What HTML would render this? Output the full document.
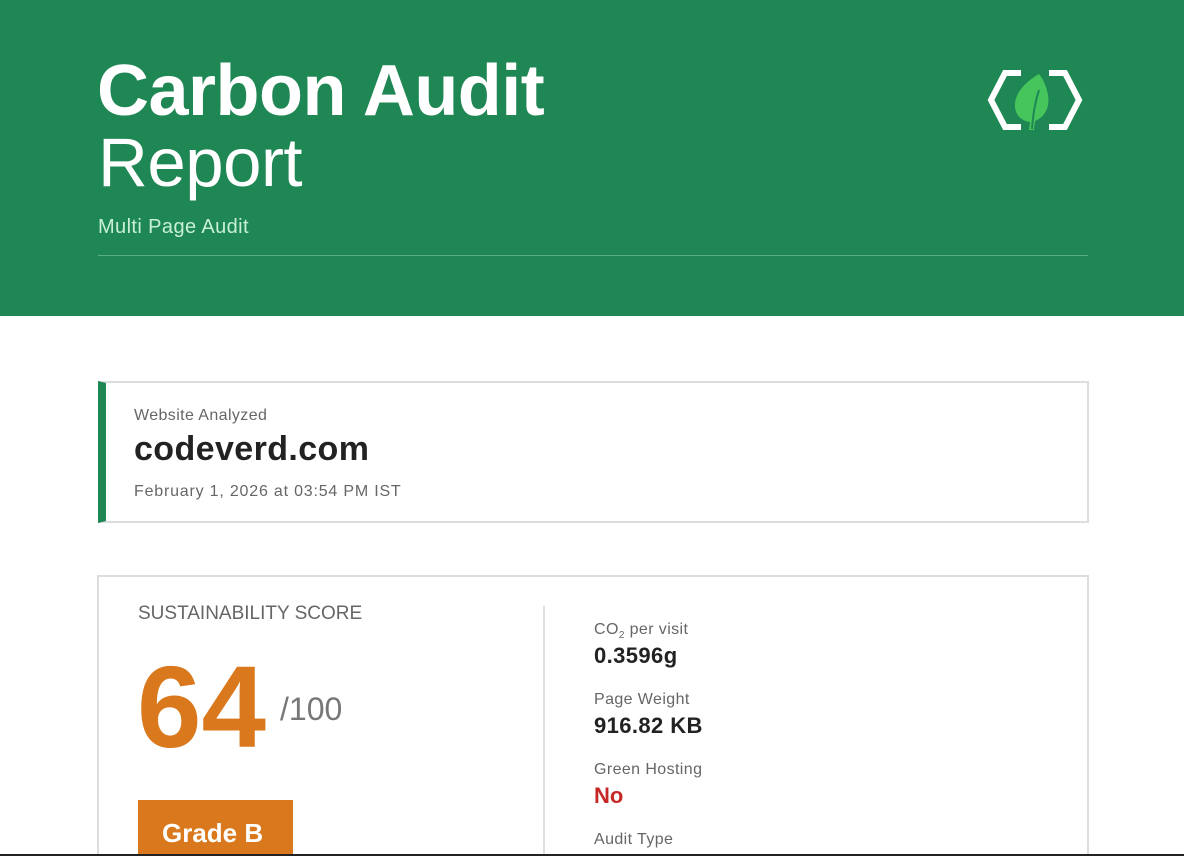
<!DOCTYPE html>
<html><head><style>
*{margin:0;padding:0;box-sizing:border-box}
html,body{width:1184px;height:856px;overflow:hidden}
body{background:#fff;font-family:"Liberation Sans",sans-serif;position:relative}
.hdr{position:absolute;left:0;top:0;width:1184px;height:316px;background:#1f8754}
.t1{position:absolute;left:97px;top:51px;font-size:72px;font-weight:bold;color:#fff;letter-spacing:-0.5px;line-height:80px}
.t2{position:absolute;left:98px;top:124px;font-size:69px;font-weight:300;color:#fff;line-height:78px;letter-spacing:-0.5px}
.sub{position:absolute;left:98px;top:216px;font-size:20px;color:#c8f0d6;letter-spacing:0.4px}
.rule{position:absolute;left:98px;top:255px;width:990px;height:1px;background:#5aac82}
.c1{position:absolute;left:98px;top:381px;width:991px;height:142px;border:2px solid #ddd;border-left:8px solid #1f8754}
.c2{position:absolute;left:97px;top:575px;width:992px;height:300px;border:2px solid #ddd}
.lbl{color:#666;font-size:16px;letter-spacing:0.4px}
.abs{position:absolute}
</style></head><body>
<div class="hdr">
<div class="t1">Carbon Audit</div>
<div class="t2">Report</div>
<div class="sub">Multi Page Audit</div>
<div class="rule"></div>
<svg class="abs" style="left:985px;top:70px" width="100" height="64" viewBox="0 0 100 64">
<path d="M36 3H20L6 30L20 57H36" fill="none" stroke="#fff" stroke-width="6"/>
<path d="M64 3H80L94 30L80 57H64" fill="none" stroke="#fff" stroke-width="6"/>
<path d="M54 4C40 12 29 24 30 37C31 47 38 51 45 52L44 60H49L50 51C60 47 65 37 63 25C61 15 58 9 54 4Z" fill="#45c55c"/>
<path d="M54 20C50 32 48 44 47 59" fill="none" stroke="#1f8754" stroke-width="2"/>
</svg>
</div>
<div class="c1">
<div class="abs lbl" style="left:28px;top:24px">Website Analyzed</div>
<div class="abs" style="left:28px;top:47px;font-size:34px;font-weight:bold;color:#222;letter-spacing:0.4px">codeverd.com</div>
<div class="abs lbl" style="left:28px;top:100px;letter-spacing:0.8px">February 1, 2026 at 03:54 PM IST</div>
</div>
<div class="c2">
<div class="abs" style="left:39px;top:26px;font-size:19px;color:#666">SUSTAINABILITY SCORE</div>
<div class="abs" style="left:38px;top:60px;font-size:116px;font-weight:bold;color:#d9781c;letter-spacing:0;line-height:140px">64</div>
<div class="abs" style="left:181px;top:114px;font-size:32px;font-weight:300;color:#777">/100</div>
<div class="abs" style="left:39px;top:223px;width:155px;height:70px;background:#d9781c;color:#fff;font-size:26px;font-weight:bold;padding:18px 0 0 24px">Grade B</div>
<div class="abs" style="left:444px;top:29px;width:2px;height:260px;background:#e0e0e0"></div>
<div class="abs lbl" style="left:495px;top:44px">CO<sub style="font-size:10px">2</sub> per visit</div>
<div class="abs" style="left:495px;top:66px;font-size:22px;font-weight:bold;color:#222;letter-spacing:0.4px">0.3596g</div>
<div class="abs lbl" style="left:495px;top:114px">Page Weight</div>
<div class="abs" style="left:495px;top:136px;font-size:22px;font-weight:bold;color:#222;letter-spacing:0.4px">916.82 KB</div>
<div class="abs lbl" style="left:495px;top:184px">Green Hosting</div>
<div class="abs" style="left:495px;top:206px;font-size:22px;font-weight:bold;color:#c62828">No</div>
<div class="abs lbl" style="left:495px;top:254px">Audit Type</div>
</div>
<div class="abs" style="left:0;top:854px;width:1184px;height:2px;background:#222"></div>
</body></html>
